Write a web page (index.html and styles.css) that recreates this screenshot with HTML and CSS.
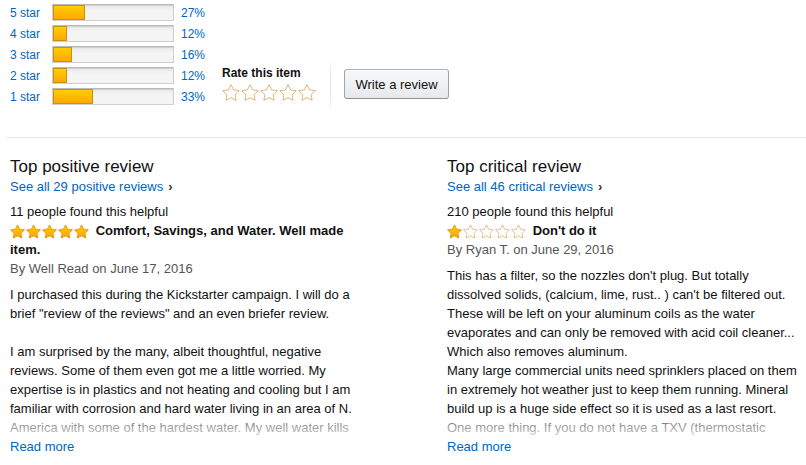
FILE: index.html
```html
<!DOCTYPE html>
<html>
<head>
<meta charset="utf-8">
<link rel="stylesheet" href="styles.css">
</head>
<body>
<svg class="defs" width="0" height="0">
  <defs>
    <linearGradient id="gold" x1="0" y1="0" x2="0" y2="1">
      <stop offset="0" stop-color="#ffd000"/>
      <stop offset="1" stop-color="#ffa200"/>
    </linearGradient>
    <symbol id="sf" viewBox="1.2 1.2 21.6 20.6">
      <path d="M12 2l3.09 6.26L22 9.27l-5 4.87 1.18 6.88L12 17.77l-6.18 3.25L7 14.14 2 9.27l6.91-1.01L12 2z" fill="url(#gold)" stroke="#d9890c" stroke-width="1.1" stroke-linejoin="round"/>
    </symbol>
    <symbol id="so" viewBox="1.2 1.2 21.6 20.6">
      <path d="M12 2l3.09 6.26L22 9.27l-5 4.87 1.18 6.88L12 17.77l-6.18 3.25L7 14.14 2 9.27l6.91-1.01L12 2z" fill="#fff" stroke="#dcae6a" stroke-width="1.1" stroke-linejoin="round"/>
    </symbol>
  </defs>
</svg>

<div class="top">
  <div class="hist">
    <a class="lbl">5 star</a><div class="meter"><div class="fill" style="width:27%"></div></div><a class="pct">27%</a>
    <a class="lbl">4 star</a><div class="meter"><div class="fill" style="width:12%"></div></div><a class="pct">12%</a>
    <a class="lbl">3 star</a><div class="meter"><div class="fill" style="width:16%"></div></div><a class="pct">16%</a>
    <a class="lbl">2 star</a><div class="meter"><div class="fill" style="width:12%"></div></div><a class="pct">12%</a>
    <a class="lbl">1 star</a><div class="meter"><div class="fill" style="width:33%"></div></div><a class="pct">33%</a>
  </div>
  <div class="actions">
    <div class="rate">
      <div class="rate-title">Rate this item</div>
      <svg class="rate-stars" width="95" height="17" viewBox="0 0 95 17">
        <use href="#so" x="0" y="0" width="18" height="17"/>
        <use href="#so" x="19" y="0" width="18" height="17"/>
        <use href="#so" x="38" y="0" width="18" height="17"/>
        <use href="#so" x="57" y="0" width="18" height="17"/>
        <use href="#so" x="76" y="0" width="18" height="17"/>
      </svg>
    </div>
    <div class="vsep"></div>
    <button class="btn">Write a review</button>
  </div>
</div>

<div class="hr"></div>

<div class="reviews">
  <div class="col">
    <h3 class="head">Top positive review</h3>
    <div class="line"><a class="link">See all 29 positive reviews</a><span class="chev">›</span></div>
    <div class="helpful">11 people found this helpful</div>
    <div class="title-line">
      <svg class="stars" width="79" height="15" viewBox="0 0 79 15">
        <use href="#sf" x="0" y="0" width="15" height="15"/>
        <use href="#sf" x="16" y="0" width="15" height="15"/>
        <use href="#sf" x="32" y="0" width="15" height="15"/>
        <use href="#sf" x="48" y="0" width="15" height="15"/>
        <use href="#sf" x="64" y="0" width="15" height="15"/>
      </svg>
      <span class="title">Comfort, Savings, and Water. Well made item.</span>
    </div>
    <div class="by">By <span class="author">Well Read</span> on June 17, 2016</div>
    <div class="body">
      <p>I purchased this during the Kickstarter campaign. I will do a brief "review of the reviews" and an even briefer review.</p>
      <p>I am surprised by the many, albeit thoughtful, negative reviews. Some of them even got me a little worried. My expertise is in plastics and not heating and cooling but I am familiar with corrosion and hard water living in an area of N. America with some of the hardest water. My well water kills</p>
    </div>
    <a class="link more">Read more</a>
  </div>
  <div class="col">
    <h3 class="head">Top critical review</h3>
    <div class="line"><a class="link">See all 46 critical reviews</a><span class="chev">›</span></div>
    <div class="helpful">210 people found this helpful</div>
    <div class="title-line">
      <svg class="stars" width="79" height="15" viewBox="0 0 79 15">
        <use href="#sf" x="0" y="0" width="15" height="15"/>
        <use href="#so" x="16" y="0" width="15" height="15"/>
        <use href="#so" x="32" y="0" width="15" height="15"/>
        <use href="#so" x="48" y="0" width="15" height="15"/>
        <use href="#so" x="64" y="0" width="15" height="15"/>
      </svg>
      <span class="title">Don't do it</span>
    </div>
    <div class="by">By <span class="author">Ryan T.</span> on June 29, 2016</div>
    <div class="body">
      <p>This has a filter, so the nozzles don't plug. But totally dissolved solids, (calcium, lime, rust.. ) can't be filtered out. These will be left on your aluminum coils as the water evaporates and can only be removed with acid coil cleaner... Which also removes aluminum.<br>Many large commercial units need sprinklers placed on them in extremely hot weather just to keep them running. Mineral build up is a huge side effect so it is used as a last resort.<br>One more thing. If you do not have a TXV (thermostatic</p>
    </div>
    <a class="link more">Read more</a>
  </div>
</div>
</body>
</html>
```

FILE: styles.css
```css
html, body {
  margin: 0;
  background: #fff;
}
body {
  padding: 4px 0 0 10px;
  font-family: "Liberation Sans", Arial, sans-serif;
  font-size: 13px;
  line-height: 19px;
  color: #111;
}
.defs {
  position: absolute;
  width: 0;
  height: 0;
  overflow: hidden;
}
a {
  color: #0066c0;
  text-decoration: none;
}

/* top area */
.top {
  display: flex;
  align-items: flex-start;
  height: 104px;
}
.hist {
  display: grid;
  grid-template-columns: 42px 122px 31px;
  grid-auto-rows: 17px;
  row-gap: 4px;
  align-items: center;
  font-size: 12px;
  line-height: 17px;
}
.lbl {
  white-space: nowrap;
  padding-top: 1px;
}
.pct {
  text-align: right;
  padding-top: 1px;
}
.meter {
  height: 17px;
  box-sizing: border-box;
  background: linear-gradient(#e9e9e9, #f5f5f5 40%, #f4f4f4);
  border: 1px solid #cfcfcf;
  border-top-color: #b9b9b9;
  border-radius: 1px;
  box-shadow: inset 0 1px 1px rgba(0, 0, 0, 0.12);
  overflow: hidden;
}
.fill {
  height: 15px;
  box-sizing: border-box;
  background: linear-gradient(#ffce00, #ffa800);
  border: 1px solid #c99212;
  border-left: none;
  box-shadow: inset 1px 0 0 #c99212;
}
.actions {
  display: flex;
  align-items: center;
  height: 46px;
  margin-top: 58px;
  margin-left: 17px;
}
.rate {
  display: flex;
  flex-direction: column;
  padding-bottom: 4px;
}
.rate-title {
  font-size: 12px;
  font-weight: bold;
  line-height: 14px;
  margin-bottom: 4px;
}
.rate-stars {
  display: block;
}
.vsep {
  align-self: stretch;
  width: 1px;
  margin-left: 13px;
  background: linear-gradient(rgba(231, 231, 231, 0.3), #e3e3e3 25%, #e3e3e3 75%, rgba(231, 231, 231, 0.3));
}
.btn {
  margin-left: 13px;
  margin-bottom: 2px;
  width: 105px;
  height: 30px;
  box-sizing: border-box;
  font-family: "Liberation Sans", Arial, sans-serif;
  font-size: 13px;
  color: #111;
  padding: 0;
  border: 1px solid;
  border-color: #adb1b8 #a2a6ac #8d9096;
  border-radius: 3px;
  background: linear-gradient(#f7f8fa, #e7e9ec);
  box-shadow: inset 0 1px 0 rgba(255, 255, 255, 0.6);
}

.hr {
  margin: 29px 0 0 -3px;
  border-top: 1px solid #e3e3e3;
}

/* reviews */
.reviews {
  display: grid;
  grid-template-columns: 352px 352px;
  column-gap: 85px;
  margin-top: 18px;
}
.col {
  display: flex;
  flex-direction: column;
  height: 300px;
}
.head {
  margin: 0;
  font-size: 17px;
  line-height: 21px;
  font-weight: normal;
  color: #111;
}
.chev {
  margin-left: 5px;
  color: #333;
  font-weight: bold;
}
.helpful {
  margin-top: 6px;
}
.stars {
  vertical-align: -4px;
  margin-right: 3px;
}
.title {
  font-weight: bold;
}
.by {
  color: #555;
}
.body {
  margin-top: 7px;
  flex: 1;
  position: relative;
}
.body p {
  margin: 0 0 19px;
}
.body p:last-child {
  margin-bottom: 0;
}
.body::after {
  content: "";
  position: absolute;
  left: 0;
  right: 0;
  bottom: 0;
  height: 20px;
  background: linear-gradient(rgba(255, 255, 255, 0.35), rgba(255, 255, 255, 0.8));
}
.more {
  display: block;
  line-height: 19px;
}
```
